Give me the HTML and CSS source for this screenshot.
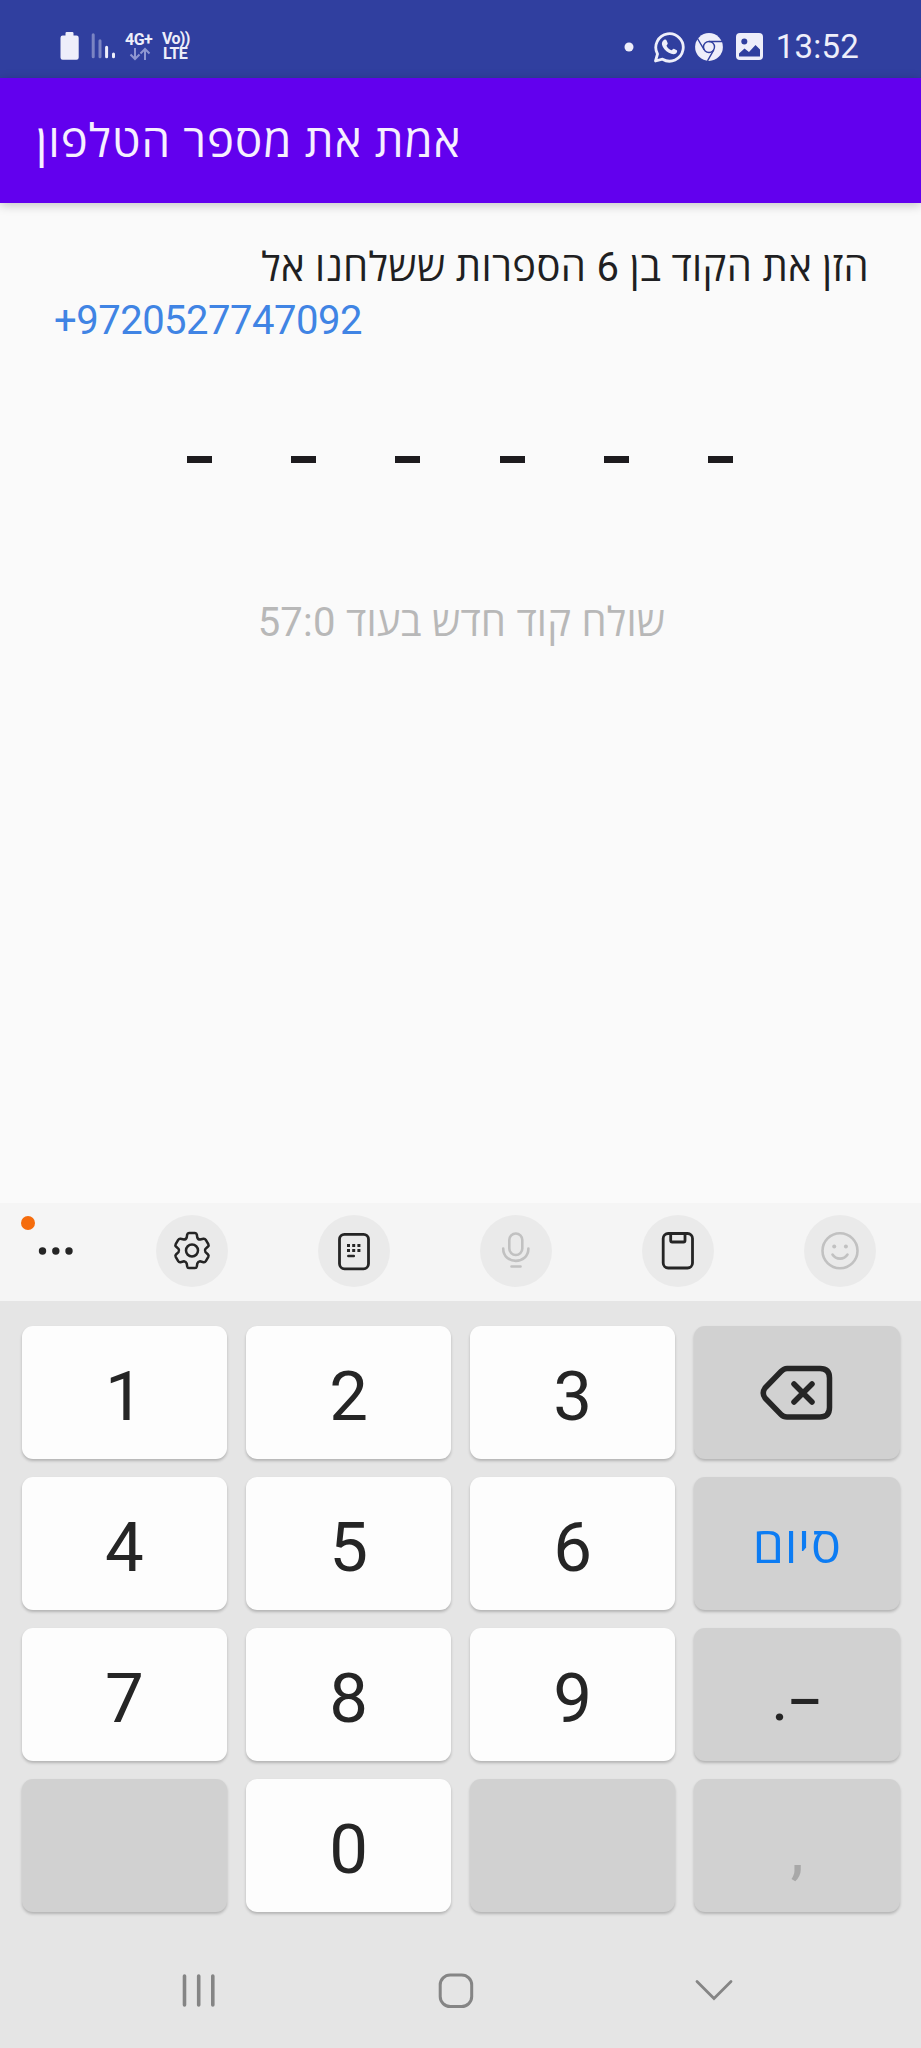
FILE: index.html
```html
<!DOCTYPE html>
<html lang="he">
<head>
<meta charset="utf-8">
<title>אמת את מספר הטלפון</title>
<link rel="stylesheet" href="styles.css">
</head>
<body>
<div class="screen">
  <header class="status">
    <div class="status-left">
      <svg width="19" height="28" viewBox="0 0 19 28"><path fill="#eeeefa" d="M5.5 1.2Q5.5 0 6.700 0H12.300Q13.500 0 13.500 1.200V3.500H16.500Q18.700 3.500 18.700 5.700V25.500Q18.700 27.700 16.500 27.700H2.700Q.5 27.700 .5 25.500V5.700Q.5 3.500 2.700 3.500H5.500Z"/></svg>
      <svg class="signal" width="25" height="28" viewBox="91 32 25 28" fill="none" stroke="#eeeefa" stroke-width="3" stroke-linecap="round"><path opacity=".4" d="M93.200 34.800V56.700M100 40.800V56.700"/><path d="M106.600 47.300V56.700M113.500 54V56.700"/></svg>
      <div class="net"><span class="g4">4G+</span>
        <svg width="22" height="14" viewBox="0 0 22 14" fill="none" stroke="#8f97d2" stroke-width="2"><path d="M6 1V12M1.500 7.500L6 12L10.500 7.500M16 13V2M11.500 6.500L16 2L20.500 6.500"/></svg>
      </div>
      <div class="volte"><span class="vo">Vo))</span><span class="lte">LTE</span></div>
    </div>
    <div class="status-right">
      <svg width="10" height="10" viewBox="0 0 10 10"><circle cx="5" cy="5" r="4.500" fill="#eeeefa"/></svg>
      <svg class="wa" width="32" height="32" viewBox="653 30.500 32 32"><path fill="none" stroke="#eeeefa" stroke-width="2.800" stroke-linejoin="round" d="M655.500 60.500L657.500 53.500A13.700 13.700 0 1 1 662.500 58.700Z"/><path fill="#eeeefa" d="M664 39.500C665 38.800 666.200 39 666.700 40.200L667.700 42.700C668 43.600 666.600 44.500 666.500 45.200C667.400 47.400 669.200 49 671.400 49.800C672.200 49.700 673.100 48 673.900 48.300L676.800 49.700C677.600 50.200 676.900 52 676.300 52.700C674.500 54.300 671.800 53.900 668.800 52.300C665.500 50.500 662.700 47.200 662 44.200C661.600 42.300 662.500 40.400 664 39.500Z"/></svg>
      <svg class="chrome" width="28" height="28" viewBox="-14 -14 28 28"><circle r="13.900" fill="#eeeefa"/><g fill="none" stroke="#303f9f" stroke-width="1.400"><circle r="5.500"/><path d="M0 -5.500H13M-4.800 2.800L-11.500 -8.500M4.800 2.800L-1.500 13.900"/></g></svg>
      <svg class="pic" width="27" height="27" viewBox="0 0 27 27"><rect width="27" height="27" rx="4" fill="#eeeefa"/><circle cx="8.300" cy="8.500" r="3" fill="#303f9f"/><path fill="#303f9f" d="M3 23.500V20.500L8.500 15.500L13 19L19.500 12L24 16.500V23.500Z"/></svg>
      <span class="time">13:52</span>
    </div>
  </header>
  <div class="appbar"><h1 class="title" dir="rtl">אמת את מספר הטלפון</h1></div>
  <main class="content">
    <p class="prompt" dir="rtl">הזן את הקוד בן 6 הספרות ששלחנו אל</p>
    <p class="phone">+9720527747092</p>
    <div class="code"><i class="dash"></i><i class="dash"></i><i class="dash"></i><i class="dash"></i><i class="dash"></i><i class="dash"></i></div>
    <p class="resend" dir="rtl">שולח קוד חדש בעוד 57:0</p>
  </main>
  <section class="tools">
    <div class="more"><i class="badge"></i><svg width="36" height="8" viewBox="0 0 36 8" fill="#252525"><circle cx="4.500" cy="4" r="3.700"/><circle cx="17.800" cy="4" r="3.700"/><circle cx="31" cy="4" r="3.700"/></svg></div>
    <div class="tool"><svg width="72" height="72" viewBox="-36 -36 72 72" fill="none" stroke="#252525" stroke-width="2.500" stroke-linejoin="round"><circle cy="-.5" r="6"/><path d="M-3 -18H3Q4.500 -18 4.800 -16.500L5.300 -13.500Q6 -11.500 8 -11.500L11.500 -12.300Q13 -12.500 13.800 -11.200L16.300 -6.800Q17 -5.500 16 -4.500L13.500 -2.200Q12.300 -.5 13.500 1.200L16 3.500Q17 4.500 16.300 5.800L13.800 10.200Q13 11.500 11.500 11.200L8 10.300Q6 10.500 5.300 12.500L4.800 15.500Q4.500 17 3 17H-3Q-4.500 17 -4.800 15.500L-5.300 12.500Q-6 10.500 -8 10.300L-11.500 11.200Q-13 11.500 -13.800 10.200L-16.300 5.800Q-17 4.500 -16 3.500L-13.500 1.200Q-12.300 -.5 -13.500 -2.200L-16 -4.500Q-17 -5.500 -16.300 -6.800L-13.800 -11.200Q-13 -12.500 -11.500 -12.300L-8 -11.500Q-6 -11.500 -5.300 -13.500L-4.800 -16.500Q-4.500 -18 -3 -18Z"/></svg></div>
    <div class="tool"><svg width="72" height="72" viewBox="-36 -36 72 72" fill="none" stroke="#252525"><rect x="-14.500" y="-16.700" width="29" height="34.500" rx="5" stroke-width="2.800"/><path stroke-width="3" stroke-dasharray="3 2.200" d="M-7 -5.500H6.500M-7 -.5H6.500"/><path stroke-width="2.500" stroke-linecap="round" d="M-5.700 5H-.2"/></svg></div>
    <div class="tool"><svg width="72" height="72" viewBox="-36 -36 72 72" fill="none" stroke="#c1c1c1" stroke-width="2.600" stroke-linecap="round"><rect x="-6.700" y="-17.500" width="13" height="21.500" rx="6.500"/><path d="M-12.800 -2.500C-12.800 14 12.400 14 12.400 -2.500M-4.500 15.500H4.500"/></svg></div>
    <div class="tool"><svg width="72" height="72" viewBox="-36 -36 72 72" fill="none" stroke="#252525" stroke-width="2.800"><rect x="-14.800" y="-17.500" width="29.300" height="34.500" rx="5"/><path stroke-linejoin="round" d="M-7.300 -16.500V-10.500Q-7.300 -9 -5.800 -9H5.500Q7 -9 7 -10.500V-16.500"/></svg></div>
    <div class="tool"><svg width="72" height="72" viewBox="-36 -36 72 72" fill="none" stroke="#c1c1c1" stroke-width="2.600" stroke-linecap="round"><circle cy="-.3" r="17.500"/><path d="M-7.500 3.500C-4 9 4 9 7.500 3.500"/><circle cx="-5.800" cy="-4.500" r="2" fill="#c1c1c1" stroke="none"/><circle cx="5.900" cy="-4.500" r="2" fill="#c1c1c1" stroke="none"/></svg></div>
  </section>
  <section class="keys">
    <div class="key">1</div><div class="key">2</div><div class="key">3</div>
    <div class="key alt"><svg width="76" height="60" viewBox="759 1363 76 60" fill="none" stroke="#252525" stroke-width="5.500"><path stroke-linejoin="round" d="M787 1368.500H820Q829.500 1368.500 829.500 1378V1407.500Q829.500 1417 820 1417H787Q783.500 1417 781 1414.500L765 1398Q761.500 1393 765 1388L781 1371.500Q784 1368.500 787 1368.500Z"/><path stroke-linecap="round" d="M794 1384L812 1402M812 1384L794 1402"/></svg></div>
    <div class="key">4</div><div class="key">5</div><div class="key">6</div>
    <div class="key alt done"><span>סיום</span></div>
    <div class="key">7</div><div class="key">8</div><div class="key">9</div>
    <div class="key alt punct"><span class="dot">.</span><span class="minus">–</span></div>
    <div class="key alt"></div><div class="key">0</div><div class="key alt"></div>
    <div class="key alt comma"><span>,</span></div>
  </section>
  <nav class="nav">
    <svg width="34" height="36" viewBox="0 0 34 36" stroke="#858585" stroke-width="3.600" stroke-linecap="round"><path d="M2.500 3V32M16.700 3V32M30.800 3V32"/></svg>
    <svg width="36" height="36" viewBox="0 0 36 36" fill="none" stroke="#858585" stroke-width="3"><rect x="2.200" y="2" width="31.500" height="31.500" rx="10"/></svg>
    <svg width="38" height="36" viewBox="0 0 38 36" fill="none" stroke="#858585" stroke-width="2.800" stroke-linecap="round"><path d="M2 8.500L19 25.500L36 8.500"/></svg>
  </nav>
</div>
</body>
</html>
```
FILE: styles.css
```css
* { box-sizing: border-box; }
body { margin: 0; background: #fafafa; font-family: Roboto, "Open Sans", sans-serif; }
svg { display: block; flex: none; }
p, h1 { margin: 0; font-weight: 400; white-space: nowrap; }
.screen { width: 921px; height: 2048px; display: flex; flex-direction: column; overflow: hidden; }

.status { height: 78px; flex: none; background: #303f9f; color: #eeeefa; display: flex; justify-content: space-between; padding: 0 62px 0 60px; }
.status-left { display: flex; padding-top: 32px; }
.signal { margin-left: 12px; }
.net { width: 30px; margin-left: 9px; display: flex; flex-direction: column; }
.net svg { margin: 0 0 0 4px; }
.g4 { font-size: 16px; font-weight: 700; line-height: 15px; height: 15px; letter-spacing: -.5px; }
.volte { width: 32px; margin-left: 7px; display: flex; flex-direction: column; font-weight: 700; font-size: 16px; }
.vo { line-height: 14px; letter-spacing: -.7px; }
.lte { line-height: 15px; letter-spacing: -.5px; padding-left: 1px; }
.status-right { display: flex; align-items: center; padding-bottom: 14px; padding-top: 29px; }
.wa { margin-left: 19px; }
.chrome { margin-left: 10px; }
.pic { margin-left: 13px; }
.time { font-size: 33px; line-height: 35px; margin-left: 13px; letter-spacing: .2px; }

.appbar { height: 125px; flex: none; background: #6200ee; color: #f6efff; padding: 36px 0 0 36px; display: flex; align-items: flex-start; box-shadow: 0 2px 10px rgba(0,0,0,.22); }
.title { font-size: 45.500px; line-height: 56px; letter-spacing: 1px; }

.content { height: 1000px; flex: none; padding: 38px 52px 0 54px; color: #1f1f22; display: flex; flex-direction: column; }
.prompt { font-size: 40px; line-height: 54px; height: 54px; letter-spacing: .35px; }
.phone { font-size: 40px; line-height: 52px; height: 52px; color: #4084e4; letter-spacing: -.5px; }
.code { display: flex; gap: 79.200px; padding: 109px 0 0 133px; }
.dash { width: 25px; height: 7px; background: #1d1b1e; flex: none; }
.resend { font-size: 40px; line-height: 52px; margin-top: 134px; text-align: center; color: #b8b8b8; letter-spacing: .25px; }

.tools { height: 98px; flex: none; background: #f5f5f5; display: flex; padding: 12px 0 0 19px; }
.more { position: relative; width: 73px; height: 72px; margin-right: 63.500px; display: flex; align-items: center; justify-content: center; flex: none; }
.badge { position: absolute; left: 2px; top: 1px; width: 14px; height: 14px; border-radius: 50%; background: #f56c0d; }
.tool { width: 72px; height: 72px; border-radius: 50%; background: #eaeaea; margin-right: 90.100px; flex: none; }

.keys { height: 627px; flex: none; background: #e5e5e5; padding: 25px 21px 0 22px; display: grid; grid-template-columns: 205px 204.500px 204.500px 206px; column-gap: 19.400px; grid-auto-rows: 133px; row-gap: 18px; }
.key { background: #fdfdfd; border-radius: 11px; box-shadow: 0 2px 3px rgba(0,0,0,.22); display: flex; align-items: center; justify-content: center; font-size: 69px; line-height: 125px; color: #252525; padding-top: 7px; }
.alt { background: #d1d1d1; padding-top: 0; }
.done { color: #0c7cf3; font-size: 50px; font-weight: 500; letter-spacing: .8px; padding-top: 5px; }
.punct { font-size: 54px; font-weight: 500; padding-top: 14px; }
.comma { font-size: 60px; font-weight: 500; color: #a8a8a8; padding-top: 12px; }

.nav { flex: 1; background: #e5e5e5; display: flex; padding: 45px 188px 0 182px; justify-content: space-between; }
```
